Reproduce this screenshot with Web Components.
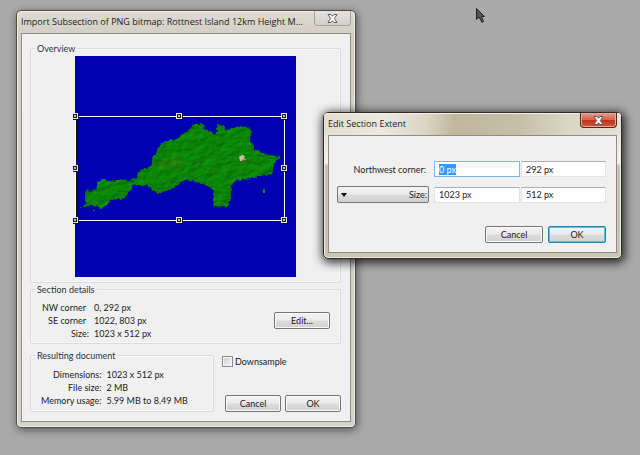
<!DOCTYPE html>
<html lang="en">
<head>
  <meta charset="UTF-8">
  <meta name="viewport" content="width=device-width, initial-scale=1.0">
  <title>Import Subsection</title>
  <style>
    body {
      margin: 0;
      min-height: 100vh;
      background: #a9a9a9;
      color: #1c1c1c;
      font: 9px/13px Lato, "Open Sans", sans-serif;
    }
  </style>
</head>
<body>

  <desk-top>
    <app-window class="import" heading="Import Subsection of PNG bitmap: Rottnest Island 12km Height M...">
      <import-panel></import-panel>
    </app-window>
    <app-window class="extent" heading="Edit Section Extent" active>
      <extent-form></extent-form>
    </app-window>
    <mouse-pointer></mouse-pointer>
  </desk-top>

  <script>
    // Free canvas that the windows and the pointer are placed on
    class DeskTop extends HTMLElement {
      constructor() {
        super();
        this.attachShadow({ mode: 'open' });
        this.shadowRoot.innerHTML = `
          <style>
            :host {
              display: block;
              position: relative;
              min-height: 100vh;
              overflow: hidden;
            }
            ::slotted(*) { position: absolute; }
            ::slotted(.import) { left: 16px; top: 10px; width: 340px; }
            ::slotted(.extent) { left: 323px; top: 112px; width: 299px; }
            ::slotted(mouse-pointer) { left: 476px; top: 8px; }
          </style>
          <slot></slot>
        `;
      }
    }

    class AppWindow extends HTMLElement {
      constructor() {
        super();
        this.attachShadow({ mode: 'open' });
        this.render();
      }

      render() {
        const heading = this.getAttribute('heading') || '';

        this.shadowRoot.innerHTML = `
          <style>
            :host {
              display: block;
              box-sizing: border-box;
              border: 1px solid #4e4c48;
              border-radius: 5px;
              padding: 0 4px 5px;
              background: linear-gradient(#dedbd4, #d3cfc6 23px, #d6d3cb);
              box-shadow: inset 0 0 0 1px #f0eee8, 1px 2px 8px rgba(0, 0, 0, 0.5);
            }
            :host([active]) {
              border-color: #2c2b28;
              background: linear-gradient(#e0dccf, #f4f2ea 50px, #c9c2ac 53px, #cbc4af);
              box-shadow: inset 0 0 0 1px #ece9de, 1px 2px 10px 2px rgba(0, 0, 0, 0.75);
            }
            header {
              display: flex;
              justify-content: space-between;
              align-items: center;
              height: 22px;
              margin: 0 -4px;
              padding: 0 4px;
              border-radius: 4px 4px 0 0;
            }
            :host([active]) header {
              background: linear-gradient(95deg, #e2decf, #ebe8de 20%, #dcd6c6 34%, #c0b79d 44%, #c6bea7 65%, #dbd6c6 82%, #e4e1d6);
              box-shadow: inset 0 1px #f4f2ea;
            }
            h2 {
              margin: 0;
              font: 9px/14px "Open Sans", "Noto Sans", sans-serif;
              white-space: nowrap;
            }
            button {
              align-self: flex-start;
              display: flex;
              justify-content: center;
              align-items: center;
              flex: none;
              width: 37px;
              height: 15px;
              padding: 0;
              border: 1px solid #a5a29a;
              border-top: 0;
              border-radius: 0 0 4px 4px;
              background: linear-gradient(#e4e2dc, #d4d1c9);
            }
            :host([active]) button {
              border-color: #5a231c;
              box-shadow: inset 0 0 0 1px #eba898;
              background: linear-gradient(#e59c8b, #d2634c 48%, #bd3319 52%, #d2583a);
            }
            section {
              border: 1px solid #8f8d88;
              background: #f0f0f0;
            }
          </style>
          <header>
            <h2>${heading}</h2>
            <button type="button" aria-label="Close">
              <svg width="11" height="9" viewBox="0 0 11 9">
                <path d="M1 .5h3l1.500 1.800L7 .5h3L7.300 4.500 10 8.500H7L5.500 6.700 4 8.500H1l2.700-4z" fill="#fff" stroke="#55596a"/>
              </svg>
            </button>
          </header>
          <section><slot></slot></section>
        `;
      }
    }

    class GroupBox extends HTMLElement {
      constructor() {
        super();
        this.attachShadow({ mode: 'open' });
        const heading = this.getAttribute('heading') || '';

        this.shadowRoot.innerHTML = `
          <style>
            :host { display: block; }
            fieldset {
              margin: 0;
              padding: 0 8px 3px;
              border: 1px solid #d3dde4;
              border-radius: 2px;
              box-shadow: inset 0 0 0 1px #f8f8f8;
              min-width: 0;
            }
            legend {
              margin-left: -4px;
              padding: 0 2px;
              line-height: 13px;
              color: #26303c;
            }
          </style>
          <fieldset>
            <legend>${heading}</legend>
            <slot></slot>
          </fieldset>
        `;
      }
    }

    class PushButton extends HTMLElement {
      constructor() {
        super();
        this.attachShadow({ mode: 'open' });
        this.shadowRoot.innerHTML = `
          <style>
            :host { display: block; width: 56px; }
            button {
              display: block;
              width: 100%;
              height: 17px;
              padding: 0;
              border: 1px solid #767676;
              border-radius: 2px;
              background: linear-gradient(#f3f3f3, #ebebeb 48%, #dddddd 52%, #d0d0d0);
              box-shadow: inset 0 0 0 1px #fafafa;
              color: inherit;
              font: inherit;
            }
            :host([default]) button {
              border-color: #2f7ea5;
              box-shadow: inset 0 0 0 1px #4fc6ee;
            }
          </style>
          <button type="button"><slot></slot></button>
        `;
      }
    }

    class IslandMap extends HTMLElement {
      constructor() {
        super();
        this.attachShadow({ mode: 'open' });

        // Grips sit on the corners and the edge midpoints of the section
        const grips = [[0, 60], [104, 60], [209, 60], [0, 112], [209, 112], [0, 164], [104, 164], [209, 164]]
          .map(([x, y]) => `<rect x="${x - 1.5}" y="${y - 1.5}" width="5" height="5" fill="none" stroke="#111"/>
            <rect x="${x - 2.5}" y="${y - 2.5}" width="5" height="5" fill="#222" stroke="#e4e4e4"/>
            <rect x="${x - 1}" y="${y - 1}" width="2" height="2" fill="#bbb"/>`)
          .join('');

        this.shadowRoot.innerHTML = `
          <style>
            :host { display: block; }
            svg { display: block; width: 100%; overflow: visible; }
          </style>
          <svg viewBox="0 0 221 221" role="img" aria-label="Island overview">
            <defs>
              <filter id="terrain" x="-5%" y="-5%" width="110%" height="110%" color-interpolation-filters="sRGB">
                <feTurbulence type="fractalNoise" baseFrequency=".28" numOctaves="2" seed="4" result="edge"/>
                <feDisplacementMap in="SourceGraphic" in2="edge" scale="5" xChannelSelector="R" yChannelSelector="G" result="land"/>
                <feTurbulence type="fractalNoise" baseFrequency=".09 .16" numOctaves="4" seed="9"/>
                <feColorMatrix values="0 0 0 0 0  0 0 0 0 0  0 0 0 0 0  1 0 0 0 0" result="height"/>
                <feDiffuseLighting in="height" surfaceScale="1" lighting-color="#fff" result="light">
                  <feDistantLight azimuth="225" elevation="55"/>
                </feDiffuseLighting>
                <feComposite in="light" in2="land" operator="arithmetic" k1="1.15" result="lit"/>
                <feComposite in="lit" in2="land" operator="in"/>
              </filter>
            </defs>
            <rect width="221" height="221" fill="#0000b0"/>
            <g filter="url(#terrain)">
              <path fill="#0c8c08" stroke="#147c10" d="M6 151l5-4-1-7 1-6 5 2 6-4 1-5 5-5 4 3 6 0 8-2 7 2 7-2 4-8 11-4 3-10 6-9 4-6 15-3 4-5 8-4 4-5 8-1 3 5 9 6 4-4-1-6h7l1 5 11-3h13l3 7-2 7 5 8 9 5 16 3-6 7-2 10-11 1-12 4-13 1-5 6-1 11-2 9h-8l-6 1-1-9 1-8-10-6-6-3-14-1-10 8-16 5-12-8-12 0-10 13-13 2-8 8-9-3-6 1z"/>
              <path fill="#208c10" d="M188 133h2v4h-2zM18 153h2v2h-2z"/>
              <path fill="#487c10" opacity=".4" d="M82 107l8-4 12-3 8 6-9 8-7-4-9 4z"/>
            </g>
            <path fill="#c8bea8" d="M164 101l3-2 3 1-1 2 2 2-3 1-3 0z"/>
            <path fill="#804828" d="M168 103l3 2-1 1-3-1z"/>
            <rect x="1.5" y="61.5" width="209" height="104" fill="none" stroke="#111"/>
            <rect x=".5" y="60.5" width="209" height="104" fill="none" stroke="#fff"/>
            ${grips}
          </svg>
        `;
      }
    }

    class ImportPanel extends HTMLElement {
      constructor() {
        super();
        this.attachShadow({ mode: 'open' });
        this.shadowRoot.innerHTML = `
          <style>
            :host {
              display: flex;
              flex-direction: column;
              padding: 8px 9px 9px 8px;
            }
            island-map { width: 221px; margin: 1px auto 2px 36px; }
            .details {
              display: flex;
              justify-content: space-between;
              align-items: center;
              padding: 5px 2px 0 0;
            }
            dl {
              display: grid;
              grid-template-columns: max-content max-content;
              column-gap: 5px;
              margin: 0;
            }
            dt { text-align: right; }
            dd { margin: 0; }
            .details dl { padding-left: 3px; }
            .corner { padding-right: 3px; }
            .document dl { padding: 6px 0 1px 2px; }
            .bottom {
              display: grid;
              grid-template-columns: 184px 1fr;
              column-gap: 8px;
              margin-top: 5px;
            }
            aside {
              display: flex;
              flex-direction: column;
              justify-content: space-between;
              padding-top: 6px;
            }
            label { display: flex; align-items: center; gap: 2px; }
            input {
              appearance: none;
              width: 11px;
              height: 11px;
              margin: 0;
              border: 1px solid #8b8d90;
              background: linear-gradient(135deg, #c8ccd0, #f8f8f8);
              box-shadow: inset 0 0 0 1px #f4f4f4;
            }
            .actions { display: flex; justify-content: flex-end; gap: 4px; }
          </style>
          <group-box heading="Overview"><island-map></island-map></group-box>
          <group-box heading="Section details">
            <div class="details">
              <dl>
                <dt class="corner">NW corner</dt><dd>0, 292 px</dd>
                <dt class="corner">SE corner</dt><dd>1022, 803 px</dd>
                <dt>Size:</dt><dd>1023 x 512 px</dd>
              </dl>
              <push-button>Edit...</push-button>
            </div>
          </group-box>
          <div class="bottom">
            <group-box class="document" heading="Resulting document">
              <dl>
                <dt>Dimensions:</dt><dd>1023 x 512 px</dd>
                <dt>File size:</dt><dd>2 MB</dd>
                <dt>Memory usage:</dt><dd>5.99 MB to 8.49 MB</dd>
              </dl>
            </group-box>
            <aside>
              <label><input type="checkbox">Downsample</label>
              <div class="actions">
                <push-button>Cancel</push-button>
                <push-button>OK</push-button>
              </div>
            </aside>
          </div>
        `;
      }
    }

    class ExtentForm extends HTMLElement {
      constructor() {
        super();
        this.attachShadow({ mode: 'open' });
        this.shadowRoot.innerHTML = `
          <style>
            :host { display: block; padding: 25px 10px 9px 8px; }
            form {
              display: grid;
              grid-template-columns: 92px 90px 1fr;
              align-items: center;
              gap: 9px 1px;
            }
            label { padding-right: 3px; text-align: right; }
            .mode {
              display: flex;
              justify-content: space-between;
              align-items: center;
              height: 17px;
              padding: 0 1px 0 3px;
              border: 1px solid #767676;
              border-radius: 2px;
              background: linear-gradient(#f3f3f3, #ebebeb 48%, #dddddd 52%, #d0d0d0);
              color: inherit;
              font: inherit;
            }
            input {
              box-sizing: border-box;
              min-width: 0;
              height: 16px;
              padding: 0 4px;
              border: 1px solid #e2e3ea;
              border-top-color: #abadb3;
              background: #fff;
              color: inherit;
              font: inherit;
              outline: none;
            }
            .first { margin-left: 4px; }
            .first:focus { border-color: #7eb4ea; }
            ::selection { background: #3399ff; color: #fff; }
            .actions {
              display: flex;
              justify-content: flex-end;
              gap: 5px;
              margin-top: 23px;
            }
            push-button { width: 58px; }
          </style>
          <form>
            <label for="north">Northwest corner:</label>
            <input id="north" class="first" value="0 px">
            <input aria-label="Northwest corner y" value="292 px">
            <button class="mode" type="button" id="mode">
              <svg width="6" height="4" viewBox="0 0 6 4"><path d="M0 0h6L3 4z"/></svg>
              <span>Size:</span>
            </button>
            <input class="first" aria-labelledby="mode" value="1023 px">
            <input aria-labelledby="mode" value="512 px">
          </form>
          <div class="actions">
            <push-button>Cancel</push-button>
            <push-button default>OK</push-button>
          </div>
        `;
      }

      connectedCallback() {
        const north = this.shadowRoot.querySelector('#north');
        north.focus();
        north.select();
      }
    }

    class MousePointer extends HTMLElement {
      constructor() {
        super();
        this.attachShadow({ mode: 'open' });
        this.shadowRoot.innerHTML = `
          <style>
            :host { display: block; }
            svg { display: block; }
          </style>
          <svg width="10" height="16" viewBox="0 0 10 16">
            <path d="M.5.500v11l2.500-2.500 3 5.500 1.500-1L5.500 8.500h3z" fill="#555" stroke="#222"/>
          </svg>
        `;
      }
    }

    customElements.define('desk-top', DeskTop);
    customElements.define('app-window', AppWindow);
    customElements.define('group-box', GroupBox);
    customElements.define('push-button', PushButton);
    customElements.define('island-map', IslandMap);
    customElements.define('import-panel', ImportPanel);
    customElements.define('extent-form', ExtentForm);
    customElements.define('mouse-pointer', MousePointer);
  </script>

</body>
</html>
